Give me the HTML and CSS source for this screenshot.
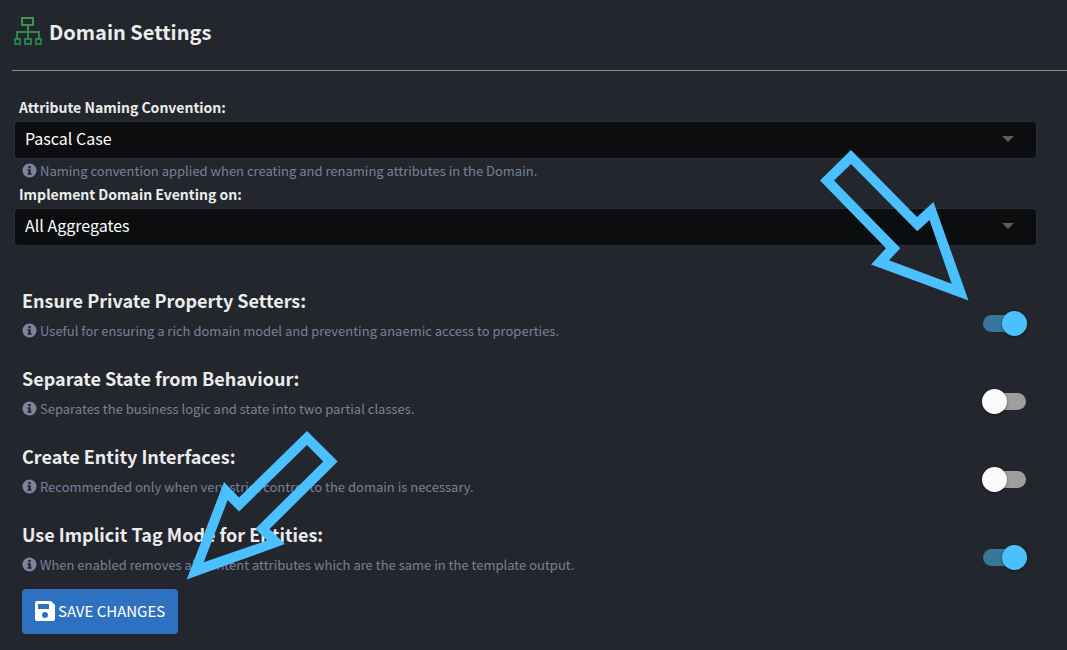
FILE: index.html
```html
<!DOCTYPE html>
<html lang="en">
<head>
<meta charset="utf-8">
<meta name="viewport" content="width=device-width, initial-scale=1">
<title>Domain Settings</title>
<link rel="stylesheet" href="styles.css">
</head>
<body>
<svg class="sprite" aria-hidden="true">
  <symbol id="info" viewBox="0 0 16 16">
    <path fill-rule="evenodd" d="M8 .5a7.5 7.5 0 1 0 0 15a7.5 7.5 0 0 0 0-15zM6.7 3.2h2.6v2.4H6.7zM5.8 6.600h3.500v4.200h1v1.700H5.800v-1.700h1V8.300h-1z"/>
  </symbol>
</svg>
<main class="page">
  <header class="header">
    <svg class="header-icon" viewBox="0 0 30 30" aria-hidden="true">
      <defs>
        <linearGradient id="tree" gradientUnits="userSpaceOnUse" x1="0" y1="0" x2="0" y2="30">
          <stop offset="0" stop-color="#3d9b50"/>
          <stop offset="1" stop-color="#1f7a42"/>
        </linearGradient>
      </defs>
      <path fill="none" stroke="url(#tree)" stroke-width="2" d="M9 1h11v7H9zM15 8v14M4 22v-7h22v7M2 22h5v5H2zM12 22h6v5h-6zM23 22h5v5h-5z"/>
    </svg>
    <h1 class="title">Domain Settings</h1>
  </header>

  <form class="form">
    <div class="field">
      <label class="field-label" for="naming">Attribute Naming Convention:</label>
      <div class="select-box">
        <select class="select" id="naming" aria-describedby="naming-hint"><option>Pascal Case</option></select>
        <svg class="caret" viewBox="0 0 12 6" aria-hidden="true"><path d="M0 0h12L6 6z"/></svg>
      </div>
      <p class="hint" id="naming-hint"><svg class="info"><use href="#info"/></svg>Naming convention applied when creating and renaming attributes in the Domain.</p>
    </div>
    <div class="field">
      <label class="field-label" for="eventing">Implement Domain Eventing on:</label>
      <div class="select-box">
        <select class="select" id="eventing"><option>All Aggregates</option></select>
        <svg class="caret" viewBox="0 0 12 6" aria-hidden="true"><path d="M0 0h12L6 6z"/></svg>
      </div>
    </div>

    <div class="options">
      <div class="option">
        <div class="option-text">
          <label class="option-label" for="setters">Ensure Private Property Setters:</label>
          <p class="hint"><svg class="info"><use href="#info"/></svg>Useful for ensuring a rich domain model and preventing anaemic access to properties.</p>
        </div>
        <input class="switch" id="setters" type="checkbox" checked>
      </div>
      <div class="option">
        <div class="option-text">
          <label class="option-label" for="state">Separate State from Behaviour:</label>
          <p class="hint"><svg class="info"><use href="#info"/></svg>Separates the business logic and state into two partial classes.</p>
        </div>
        <input class="switch" id="state" type="checkbox">
      </div>
      <div class="option">
        <div class="option-text">
          <label class="option-label" for="interfaces">Create Entity Interfaces:</label>
          <p class="hint"><svg class="info"><use href="#info"/></svg>Recommended only when very strict control to the domain is necessary.</p>
        </div>
        <input class="switch" id="interfaces" type="checkbox">
      </div>
      <div class="option">
        <div class="option-text">
          <label class="option-label" for="implicit">Use Implicit Tag Mode for Entities:</label>
          <p class="hint"><svg class="info"><use href="#info"/></svg>When enabled removes all content attributes which are the same in the template output.</p>
        </div>
        <input class="switch" id="implicit" type="checkbox" checked>
      </div>
    </div>

    <button class="save" type="button">
      <svg class="save-icon" viewBox="0 0 20 20" aria-hidden="true"><path fill-rule="evenodd" d="M2 0h14l4 4v14a2 2 0 0 1-2 2H2a2 2 0 0 1-2-2V2a2 2 0 0 1 2-2zM3 3v5h11V3zM10 11a3 3 0 1 0 0 6a3 3 0 0 0 0-6z"/></svg>
      SAVE CHANGES
    </button>
  </form>

  <svg class="arrow arrow-switch" viewBox="820 150 149 151" aria-hidden="true">
    <path fill-rule="evenodd" d="M851 150L917 217L933.500 202L968.500 300.500L871 264.500L886 248.300L820 180.500zM851 164L834 180.500L900.300 248.300L889 260.300L951.700 283.700L929.500 220L917.300 231.300z"/>
  </svg>
  <svg class="arrow arrow-save" viewBox="186 431 152 149" aria-hidden="true">
    <path fill-rule="evenodd" d="M307 431L337.700 461.500L269.500 529L285 544L186.700 579.500L224 482L239 497.500zM307 445L239 511.500L227.700 500L203.700 562.300L267 540.500L255.300 528.700L323.300 461.500z"/>
  </svg>
</main>
</body>
</html>
```

FILE: styles.css
```css
* {
  box-sizing: border-box;
}

body {
  margin: 0;
  background: #23262d;
  color: #ececec;
  font-family: "Noto Sans CJK SC", "Noto Sans", sans-serif;
  font-size: 14px;
}

h1,
p {
  margin: 0;
}

.sprite {
  position: absolute;
  width: 0;
  height: 0;
}

.page {
  position: relative;
  padding: 0 0 16px 12px;
}

.header {
  display: flex;
  align-items: center;
  gap: 6px;
  padding: 15px 0 21px 1px;
  border-bottom: 1px solid #8b8c8c;
}

.header-icon {
  width: 30px;
  height: 30px;
}

.title {
  font-size: 20px;
  font-weight: 700;
  line-height: 34px;
}

.form {
  padding: 24px 30px 0 2px;
}

.field-label {
  display: block;
  padding: 0 0 2px 5px;
  font-size: 14px;
  font-weight: 700;
  line-height: 24px;
}

.select-box {
  position: relative;
}

.select {
  display: block;
  width: 100%;
  height: 38px;
  padding: 0 40px 4px 10px;
  border: 1px solid #2b2e38;
  border-radius: 4px;
  background: #0c0d0e;
  color: #fff;
  font: inherit;
  font-size: 16px;
  appearance: none;
}

.caret {
  position: absolute;
  top: 15px;
  right: 23px;
  width: 12px;
  height: 6px;
  fill: #5c5c5c;
  pointer-events: none;
}

.hint {
  display: flex;
  align-items: center;
  gap: 3px;
  padding-left: 8px;
  color: #76829a;
  font-size: 13px;
  line-height: 23px;
}

.info {
  width: 15px;
  height: 15px;
  flex: none;
  fill: #7d859c;
}

.options {
  display: grid;
  gap: 20px;
  padding-top: 38px;
}

.option {
  display: flex;
  align-items: flex-end;
  justify-content: space-between;
  padding-right: 10px;
}

.option-label {
  display: block;
  padding: 0 0 3px 8px;
  font-size: 18px;
  font-weight: 700;
  line-height: 32px;
}

.switch {
  position: relative;
  flex: none;
  width: 45px;
  height: 25px;
  margin: 0 0 6px;
  appearance: none;
}

.switch::before {
  content: "";
  position: absolute;
  inset: 4px 1px;
  border-radius: 9px;
  background: #9e9e9e;
}

.switch::after {
  content: "";
  position: absolute;
  top: 0;
  left: 0;
  width: 25px;
  height: 25px;
  border-radius: 50%;
  background: #fafafa;
  box-shadow: 0 1px 3px rgba(0, 0, 0, 0.4);
}

.switch:checked::before {
  background: #39769a;
}

.switch:checked::after {
  left: 20px;
  background: #4bc0ff;
}

.save {
  display: flex;
  align-items: center;
  gap: 3px;
  height: 45px;
  margin: 13px 0 0 8px;
  padding: 0 13px 2px;
  border: 0;
  border-radius: 4px;
  background: #2e71c0;
  color: #fff;
  font: inherit;
  font-size: 15px;
}

.save-icon {
  width: 20px;
  height: 20px;
  fill: #fff;
}

.arrow {
  position: absolute;
  fill: #4bc0ff;
  pointer-events: none;
}

.arrow-switch {
  top: 150px;
  right: 98px;
  width: 149px;
  height: 151px;
}

.arrow-save {
  top: 431px;
  left: 186px;
  width: 152px;
  height: 149px;
}
```
